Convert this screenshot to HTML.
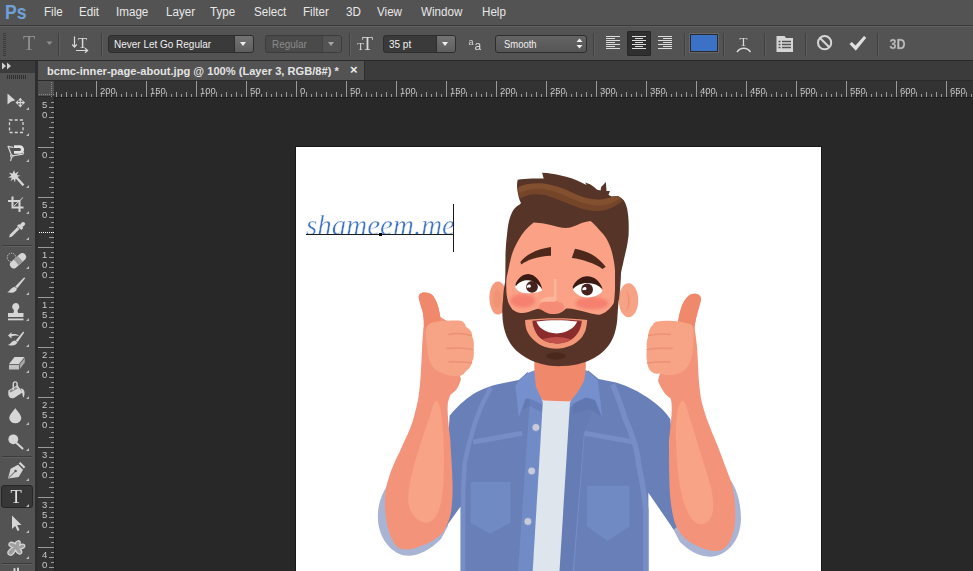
<!DOCTYPE html>
<html>
<head>
<meta charset="utf-8">
<title>Photoshop</title>
<style>
html,body{margin:0;padding:0;}
body{width:973px;height:571px;overflow:hidden;background:#282828;font-family:"Liberation Sans",sans-serif;position:relative;}
.abs{position:absolute;}
#menubar{left:0;top:0;width:973px;height:25px;background:#535353;}
#menubar span{position:absolute;top:5px;font-size:12.5px;line-height:15px;color:#e8e8e8;white-space:nowrap;transform:scaleX(0.93);transform-origin:0 0;}
#menuline{left:0;top:25px;width:973px;height:1px;background:#3a3a3a;}
#optbar{left:0;top:26px;width:973px;height:34px;background:#535353;border-top:1px solid #606060;box-sizing:border-box;}
#optline{left:0;top:60px;width:973px;height:1px;background:#2a2a2a;}
#tabbar{left:36px;top:61px;width:937px;height:19px;background:#3b3b3b;}
#tabline{left:36px;top:80px;width:937px;height:1px;background:#2a2a2a;}
#tab{left:38px;top:61px;width:326px;height:19px;background:#535353;border-right:1px solid #2e2e2e;}
#tab span{position:absolute;left:9px;top:3px;font-size:11px;font-weight:bold;color:#e4e4e4;white-space:nowrap;line-height:14px;transform:scaleX(1.01);transform-origin:0 0;}
#toolbox{left:0;top:61px;width:35px;height:510px;background:#535353;}
#tbhead{left:0;top:61px;width:35px;height:12px;background:#3b3b3b;}
#tbgap{left:35px;top:61px;width:3px;height:510px;background:#2e2e2e;}
#hruler{left:54px;top:81px;width:919px;height:16px;background:#323232;}
#vruler{left:38px;top:97px;width:16px;height:474px;background:#323232;}
#rcorner{left:38px;top:81px;width:16px;height:16px;background:#4e4e4e;border-bottom:1px solid #2a2a2a;box-sizing:border-box;}
#canvas{left:54px;top:97px;width:919px;height:474px;background:#282828;}
#doc{left:296px;top:147px;width:525px;height:424px;background:#ffffff;box-shadow:0 0 0 1px #171717;}
.dd{position:absolute;box-sizing:border-box;border:1px solid #2d2d2d;border-radius:3px;background:#3a3a3a;height:18px;top:35px;}
.dd span{position:absolute;left:5px;top:2px;font-size:10.5px;line-height:13px;color:#f0f0f0;white-space:nowrap;transform:scaleX(0.95);transform-origin:0 0;}
.dd i{position:absolute;right:0;top:0;width:18px;height:16px;background:linear-gradient(#737373,#5e5e5e);border-left:1px solid #2d2d2d;border-radius:0 2px 2px 0;}
.dd i:after{content:"";position:absolute;left:5px;top:6px;border-left:3.5px solid transparent;border-right:3.5px solid transparent;border-top:4px solid #f0f0f0;}
.sep{position:absolute;top:33px;width:1px;height:23px;background:#3e3e3e;box-shadow:1px 0 0 #5d5d5d;}
svg{position:absolute;left:0;top:0;overflow:visible;}
.rl{font-family:"Liberation Sans",sans-serif;font-size:9.5px;fill:#c8c8c8;}
</style>
</head>
<body>
<div id="canvas" class="abs"></div>
<div id="doc" class="abs"></div>
<svg width="973" height="571" viewBox="0 0 973 571" style="will-change:transform">
<defs><clipPath id="docclip"><rect x="296" y="147" width="525" height="424"/></clipPath>
<clipPath id="mouthclip"><path d="M532.400 320.700C540 319.800 548 319.400 556.500 319.400C565 319.400 573.500 319.800 581.800 320.700C581.600 324.200 580.700 327.600 579.200 330.700C577.300 334.300 574.500 337.400 571 339.700C566.700 342.300 561.600 343.500 556.500 343.400C551.500 343.400 546.500 342.200 542.300 339.600C538.900 337.400 536.500 334.300 535 330.700C533.500 327.600 532.600 324.200 532.400 320.700Z"/></clipPath>
<filter id="blur2" x="-30%" y="-30%" width="160%" height="160%"><feGaussianBlur stdDeviation="1.6"/></filter>
</defs>
<g clip-path="url(#docclip)">
<!-- ===== ARMS (behind shirt) ===== -->
<!-- left cuff -->
<path d="M389 483C381 494 377 507 378 520C379 536 388 550 402 555C414 558 428 552 441 539L448 526L440 500Z" fill="#a9b4d5"/>
<!-- right cuff -->
<path d="M731 481C738 491 741 506 741 520C740 538 731 551.500 716 556C702 559 689 551 680 542L672 527L690 500Z" fill="#a9b4d5"/>
<!-- ===== SHIRT ===== -->
<path d="M527.600 372L518.800 379.900C513 381.300 507 382.300 501.300 383.400C495 384.800 489 386.500 483.800 388.700C478.500 390.800 474 393.500 469.800 396.500C465.500 399.500 461.300 403 457.500 407C454.500 409.800 452 412.800 449.600 415.800L448.800 430L440 436V524L445.700 527.200L460.600 506.500V571H648.400V492.800L673.600 529.500L681 524V436L671.200 430L670.400 419.300C668.300 416.300 666 413.300 663.400 410.500C659.800 406.800 655.500 403.200 651 400C645.500 396 639.800 392.500 633.600 389.500C628 386.700 622 384.300 616 382.500L598.500 379L588 370.300L570 403H543Z" fill="#687fb8"/>
<!-- lighter seams -->
<g fill="none" stroke="#768dc6" stroke-width="5">
<path d="M490.800 387.800C487 395 483 402 480.300 408.800C476.500 418 473.500 427 471.500 435C468.500 445 466 455 464.500 465C463.500 480 463 495 463 510V571" stroke-width="4.500"/>
<path d="M612.600 384.300C617 395 621.500 406 624.800 417.600C629 427 632.500 436.500 635.300 445.600C637 452 638.200 458.500 638.800 465C642 480 644.500 495 645.800 510V571" stroke-width="5.500"/>
<path d="M473.300 442L522.300 433.300"/>
<path d="M584.500 433.300L633.600 442"/>
<path d="M583.500 432L572.800 571" stroke-width="2.500"/>
</g>
<!-- plackets -->
<path d="M530 398L543 405L533 571H518Z" fill="#718bc6"/>
<path d="M570 403L586 397L594 408L584 432L572.800 571H559.500Z" fill="#657cb5"/>
<path d="M574 403.500L586.300 397.400L595 400L602 417.600L590 409L572 414Z" fill="#5d74ae" opacity=".6"/>
<path d="M525.800 398.300L532.900 400L543.400 405.300L541 412L530 406L522 410Z" fill="#5d74ae" opacity=".5"/>
<!-- collars -->
<path d="M527.600 372.900L522.300 377.300C519.500 380 517 383 515.300 386C516 391 516.500 395.500 517 400C517.500 406 518.200 412 518.800 417.600C521 411 523.300 404.500 525.800 398.300C528 398.300 530.500 399 532.900 400C536.500 401.500 540 403.300 543.400 405.300C541 394 538 382.500 534.600 370.300Z" fill="#7690cd"/>
<path d="M586.300 370.300L597.700 379.900C599.500 392 601 404.500 602 417.600C599.800 411.500 597.500 405.500 595 400C592 398.800 589.200 397.800 586.300 397.400C582 399 578 401 574 403.500L568.800 408.800C571.500 397 577 384 584 370.300Z" fill="#7690cd"/>
<!-- pockets -->
<path d="M470.600 482H510.500V522.700L490 533.800L470.600 522.700Z" fill="#708bc3"/>
<path d="M587 485.700H629.500V526.400L607.300 541L587 526.400Z" fill="#708bc3"/>
<!-- tee -->
<path d="M542.900 400.500L570 401.400L559.500 571H532.700Z" fill="#dfe5ec"/>
<!-- buttons -->
<g fill="#c9ccd8" stroke="#6c86c2" stroke-width=".8">
<circle cx="535.900" cy="427.400" r="4"/><circle cx="531.600" cy="471" r="4"/><circle cx="527.900" cy="521.500" r="4"/>
</g>

<!-- ===== NECK ===== -->
<path d="M534.300 352H585.800V367.300C585.500 372 585 376.500 584 381C581.500 386 578.500 391 575.300 395.300L570 401.400L542.900 400.500C540 396 537.500 391 535.900 386.500C535 380 534.500 373.500 534.300 367.300Z" fill="#f0886b"/>

<!-- left forearm (with hand back + thumb) -->
<path d="M424.700 292.600C421 292.300 418.300 294.500 418.800 298C419.800 303 421.300 307 422.600 311.500C423.500 316 424 320 423.800 325C423.300 328 423.300 329 423.300 329.400C422.800 336 422.300 343 422 349C421.700 357 421.300 365 420.800 373.500C420.300 382 419.500 390 418.400 398C416.800 406 414.800 414 412.300 422.500C410 429 407.500 435 405 440C402.500 445 401 449 399.800 451.500C395 461 391 470 388.400 479C386 486 385 493 384.900 499.700C384.600 508 385.500 517 387.200 524.900C388.500 531 390.500 536.500 393 541C395 545.500 398 548.500 402 549C406.500 550 411.500 549.300 415.900 547.800C421.500 546 427 543.800 432 541C436.500 538.500 440.500 535.500 443.400 531.800L445.700 527.200C449 521.500 450.800 515.500 451.500 508.800C452.300 501 452.600 493.500 452.600 485.900C452.300 470 451 455 450.300 440C449.300 431 448.300 423 447.800 415C447.500 411 447.500 407 447.800 403C448.500 400.500 449.300 397.500 450.500 394.800C453.500 392.500 456 390.500 457.500 387.800C459 385 460.300 382 461 379L460 376L447 321L440.400 317C439.800 313.500 439 310.500 438.300 307.300C437 302.500 435 298.500 433 295.800C431 293.500 428 292.600 424.700 292.600Z" fill="#f3937a"/>

<path d="M436.800 400.500C440 403 442.500 415 443.500 440C444.500 465 444 485 441.500 500C439.500 512 435 521 428 522.600C420 523.500 413 517 409.500 508C406.500 498 409 484 413 470C418 450 427 425 431 412C432.500 406 434.500 401 436.800 400.500Z" fill="#f8a386"/>
<!-- right forearm -->
<path d="M693.600 293.700C697.500 293.200 701.300 295.500 701 299C700.300 303.500 699 307.500 697.800 311.500C696.500 316 695.500 320.500 694.800 325C694.700 327 694.800 328.500 694.800 329.400C695.800 336 696.700 343 697.200 349C697.700 357 698 365 698.400 373.500C698.900 382 699.700 390 700.900 398C702.500 406 705 414 708.200 422.500C710.500 429 713 435 715.200 440C718.500 448 721.500 455.500 724 463C726.500 469.500 729 475.500 731 481.300C732.500 487.500 734 493.500 734.600 499.700C735.300 506.500 735.600 513.500 735.300 520.300C734.800 527 733.500 533 731 538.700C729.500 543.500 726 547.500 721.800 550C717.500 551.500 712.500 551.300 708 550C702.500 548.500 697 546.300 692 543.300C687 540.500 682.500 536.500 679.300 531.800C676 526.500 673.800 520.500 672.500 513.400C670.800 504 669.800 495 669.500 485.900C669 470 669 455 669 440C670 431 671 423 671.500 415C671.800 411 671.800 407 671.500 403C671.500 401.500 671 399.800 670.400 398.300C667.500 396.300 665 394 663.400 391.300C661.300 388 659.300 384.500 658 380.800L659.200 376L678 321L678.800 317C679.500 313.500 680.300 310.500 681.300 307.400C682.500 304 683.700 302 685 300C687 296.500 690 294 693.600 293.700Z" fill="#f3937a"/>
<path d="M682.500 400.500C678 403 675.500 415 676 440C676.500 465 679 485 683 500C686.500 512 692 522 699 524C706 525.500 711.500 519.500 713 510.500C714.500 500 711 486 706.500 472C700.500 452 692 425 688 412C686.500 406 684.500 401 682.500 400.500Z" fill="#f8a386"/>

<!-- ===== HANDS ===== -->
<!-- thumbs -->
<path d="M424.700 292.600C421 292.300 418.300 294.500 418.800 298C419.800 303 421.300 307 422.600 311.500C423.500 316 424 320 423.800 325L426 331L441 326L440.400 317C439.800 313.500 439 310.500 438.300 307.300C437 302.500 435 298.500 433 295.800C431 293.500 428 292.600 424.700 292.600Z" fill="#f0886b"/>
<path d="M693.600 293.700C697.500 293.200 701.300 295.500 701 299C700.300 303.500 699 307.500 697.800 311.500C696.500 316 695.500 320.500 694.800 325L693 331L678 326L678.800 317C679.500 313.500 680.300 310.500 681.300 307.400C682.500 304 683.700 302 685 300C687 296.500 690 294 693.600 293.700Z" fill="#f0886b"/>
<!-- left fist -->
<path d="M425.700 332C425.500 327 428 323.500 433 322.500C437 321.500 441 321 447 320.800C452 320.500 457 320.500 461.300 320.800C464 322 465.500 324.500 466 327C470 329 472.500 332.500 472.300 336.800C474 340.500 474.300 345 473.500 349C474.300 353 474 358 472.300 361.300C471.500 365.500 469.500 369 466 371C464.500 373.500 462.500 375.500 460 376C455 376.500 451 376 446.600 374.800C441.500 373.500 437.500 371.500 434.300 368.600C430.500 364.500 428.500 359.500 428 354C427 347 426 339 425.700 332Z" fill="#f6a485"/>
<path d="M449 334.500C456 333 464 333.500 471 335.500M447 348.500C455 347.500 465 348 473 349.400M449 362C456 361.500 464 362 471.500 362.800" fill="none" stroke="#ee9073" stroke-width="1.500" stroke-linecap="round"/>
<!-- right fist -->
<path d="M693.500 331.900C693.700 327.500 692.500 325 691 324.500C686 322.500 680 321.500 674 321C668 320.500 662 320.500 657 321.500C655 322 653.500 323 653 324.500C650 327.500 648 332 648.200 336.800C646.500 340.500 646.300 345 647 349C646.300 353 646.200 357.500 647 361.300C647.500 365.500 648.500 369 650.600 371C652.500 373 655.500 374 659.200 373.500C664 375 669 375.500 674 374.800C679 373.800 683.500 371.800 686.200 368.600C689.500 364.500 691.500 359.500 692.300 354C693.200 347 693.600 339 693.500 331.900Z" fill="#f6a485"/>
<path d="M670 334.500C663 333.500 656 334 648.700 335.500M672 348.500C664 348 655 348.300 647 349.400M670 362C663 361.500 655 362 647.500 363" fill="none" stroke="#ee9073" stroke-width="1.500" stroke-linecap="round"/>

<!-- ===== HEAD ===== -->
<!-- ears -->
<ellipse cx="498" cy="298" rx="8.700" ry="16.500" fill="#f59a7c"/>
<ellipse cx="497.500" cy="299" rx="4" ry="9" fill="#f19375"/>
<ellipse cx="628.500" cy="300.300" rx="9.700" ry="17" fill="#f6a284"/>
<path d="M626 290C629 294 630.500 300 629 306C628 309 627 311 625.500 312C628 308 628.500 303 628 298C627.600 295 627 292.500 626 290Z" fill="#ee8f72"/>
<!-- hair back -->
<path d="M505 300C505.300 285 505.300 270 505.500 254.600C505.800 247 506.200 241 507 235C507.500 230 508 225 509 221C510 217 511.300 213.500 513 210.400C515 207.500 517.500 205.500 519.700 204.400L521 203C519.700 200.500 518.800 198 518.400 195.700C517.600 192.500 517.200 189.500 517 186.400C516.900 184 517.200 181.800 517.700 179.700C522 179 527 178.600 531.700 178.400L543.700 178.400L542.100 172.700C545.500 172.800 548.500 173.200 551.800 173.700C556.500 174.300 561 175.300 565.100 176.400C569.500 177.500 573.500 178.900 577.100 180.400C580.500 181.800 583.500 183.300 586.500 185L585.200 182.400L590.500 184.400C593 186 595 187.800 597.200 189.700L600.500 190.400L601.200 187C602.800 185.300 604.300 183.700 605.900 182.100L606.500 191L609.900 191L608.500 195L611.900 196.400C614 196.200 616.500 196.200 618.600 196.400C620.700 197.300 622.500 198.700 623.900 200.400C625.500 203 626.500 205.800 627.200 209C628 213 628.400 217 628.600 221C628.800 225.500 628.800 230.500 628.600 235C628 240.500 627.200 246 626.100 250C625 255 623.800 259.500 623 264C621.800 268 621.200 271.500 620.800 275L619 300Z" fill="#573428"/>
<!-- hair highlight band -->
<path d="M518.400 187C523 185 527.500 184 531.700 183.700C536 183.300 540.500 183.300 545 183.700C549.500 184.500 554 185.500 558.400 187C563 188.500 567.500 190.300 571.800 192.400C576.500 194.500 581 196.300 585.200 197.700C589.500 198.900 594 199.700 598.500 199.700C603 199.500 607.500 198.500 611.900 197C614 196.500 616.500 196.200 618.600 196.400C620 197 621.500 198.500 622.600 201C619 203.800 615.500 206 611.900 207.800C607.500 209.800 603 210.800 598.500 211C594 211 589.500 210.700 585.200 209.800C580.500 208.500 576 206.800 571.800 205C567 203 562.500 201.200 558.400 199.700C554 198 549.500 196.200 545 195C540.500 194.200 536 194 531.700 194.400C527.500 195 523.500 196.500 519.700 198.400C519 195.500 518.500 191 518.400 187Z" fill="#754529"/>
<path d="M518.400 187C523 185 527.500 184 531.700 183.700C536 183.300 540.500 183.300 545 183.700C549.500 184.500 554 185.500 558.400 187C563 188.500 567.500 190.300 571.800 192.400C576.500 194.500 581 196.300 585.200 197.700C589.500 198.900 594 199.700 598.500 199.700C603 199.500 607.500 198.500 611.900 197C614 196.500 616.500 196.200 618.600 196.400L620 198.300C617 200.300 614.500 201.800 611.900 203C607.500 204.800 603 205.500 598.500 205.500C594 205.400 589.500 204.700 585.200 203.500C580.500 202 576 200.200 571.800 198.400C567 196.300 562.500 194.500 558.400 193C554 191.500 549.500 190 545 189.300C540.500 188.700 536 188.700 531.700 189.300C527.500 190 523.500 191.200 518.800 193C518.500 191 518.400 189 518.400 187Z" fill="#83502f"/>
<!-- face -->
<path d="M506 300V282.500C506.400 278.500 507 275 508 271.500C509 266 510.200 261 511.500 255.700C513.300 250 515.700 245 518.500 240C522.500 232.500 528 226.500 533.700 222.400C537.500 222.500 541 223 545 223.800C549.500 224.700 554 225.800 558.400 227C562 227.800 565.500 228.200 569 227.800C572.800 227 576.500 225.500 579.800 223.800C583.500 222.500 587 221.300 590.500 221C593.500 223.300 596 226 598.500 229C602 232.500 605 236 607.200 240C609.800 245 611.600 250 612.800 255.700C614 261 614.800 266 615.100 271.500V330L560 350L506 330Z" fill="#faa186"/>
<!-- eyebrows -->
<path d="M520.400 262C523.500 258 527 255.300 530.700 253.400C537 250 544 248 551 247L551 255.700C544.500 256 538 257 532.200 258.900C528 260.300 524.500 262 521.200 264.400Z" fill="#4d281b"/>
<path d="M575 248.700C581 249.800 586.500 251.600 591.500 254.200C597 257.300 601.500 261.500 605.700 266.800L602.500 269C598.500 266 593.500 263.500 588.300 262C583 260 577.500 258.600 571.800 258Z" fill="#4d281b"/>
<!-- cheeks -->
<ellipse cx="522.800" cy="300.800" rx="12.500" ry="6.700" fill="#f4796a" opacity=".8" filter="url(#blur2)"/>
<ellipse cx="592" cy="303.300" rx="16.500" ry="6.200" fill="#f4796a" opacity=".8" filter="url(#blur2)"/>
<!-- eyes -->
<path d="M515 286.800C517 282 521.500 279.500 527 279.300C533.500 279.300 539.500 283.500 542.200 290.600C538.500 292.500 534 293.300 529.400 293.300C525.500 293.200 522.300 292.800 519.800 291.700C517.500 290.600 515.800 289 515 286.800Z" fill="#ffffff"/>
<circle cx="532" cy="286.800" r="5.900" fill="#45221e"/>
<path d="M526.700 287.200C526.900 285.300 528.300 284.200 529.800 284.600C531 285 531.300 286.400 530.500 287.300C529.900 287.900 529 287.900 528.600 287.300C528.200 287.900 527.300 288 526.700 287.200Z" fill="#ffffff"/>
<path d="M515.500 284.200C518 278 523 274 528.300 274C535 274.300 540.300 280.500 542.200 289C538.500 284.200 534 280.600 528 280.200C523 280.200 519 282 515.800 286.300Z" fill="#3b1a13"/>
<path d="M572.700 289C575.500 284 581 281.300 587.100 281.300C594 281.300 599.500 285 602.600 291.100C599.500 295 594 297.500 587.100 297.500C581 297.300 575.500 294.500 572.700 289Z" fill="#ffffff"/>
<circle cx="587.100" cy="289.500" r="5.900" fill="#45221e"/>
<path d="M582.300 289.700C582.500 287.800 583.900 286.700 585.400 287.100C586.600 287.500 586.900 288.900 586.100 289.800C585.500 290.400 584.600 290.400 584.200 289.800C583.800 290.400 582.900 290.500 582.300 289.700Z" fill="#ffffff"/>
<path d="M572.700 286.800C575.500 280.500 581 276.200 587.100 276.200C594.500 276.200 600.300 281.500 602.600 289C598.500 285 593.500 283 587.100 283C581.500 283 576.500 285.200 573 289Z" fill="#3b1a13"/>
<!-- nose -->
<ellipse cx="551.500" cy="307.200" rx="12.700" ry="6.800" fill="#f58d76"/>
<path d="M553.800 279H556.600V299.500C556.600 301 555.500 301.800 554 301.800H539.500C541.500 298.800 545 297 549 296.800H553.800Z" fill="#fbbba3" opacity=".8"/>
<!-- beard -->
<path d="M505.500 281C504.500 284 503.500 290 503 300C502.300 305 502.200 309 502.300 313.400C502.400 318 502.900 322.500 503.700 326.700C504.800 331.500 506.300 336 508.400 340C510.500 344 513.200 347.700 516.400 350.800C519.200 353.300 522.300 355.500 525.700 357.400C528.700 359.200 531.800 360.800 535 362.100C539.300 363.700 543.800 364.800 548.400 365.500C552.800 366 557.300 366.200 561.800 366.100C566.300 366 570.800 365.600 575.200 364.800C579.800 363.900 584.300 362.600 588.500 360.800C592.300 359.200 595.900 357.200 599.200 354.800C602.700 352.100 605.900 349 608.600 345.400C611.200 341.700 613.200 337.700 614.600 333.400C616 329 616.800 324.500 617.200 320C617.700 313.500 618 306.500 618.700 300C619.200 295 619.700 291 620.200 287.200L620.800 270L615.100 268V287.200C614.900 292.500 614.600 298 613.900 302.700C612.300 305.700 610 308.500 607.200 310.700C604.800 312.700 602 314.200 599.200 314.700C595.600 314.500 592 313.700 588.500 312.700C584 311.500 579.600 310.200 575.200 309.400C572 308.700 568.900 308.400 565.800 308.700C564.600 310 563.300 311.200 561.800 312C559.700 313.200 557.400 313.900 555.100 314C552.800 314.100 550.500 314 548.400 313.400C546 312.600 543.800 311.400 541.800 310C540.500 309.200 539.200 308.800 537.800 308.700C534.700 309.500 531.600 310.800 528.400 312C525.300 312.900 522.100 313.200 519 312.700C516.600 312.100 514.400 311 512.400 309.400C510.800 307.500 509.500 305.200 508.400 302.700C507.400 299.500 506.700 296 506.400 292L506 275Z" fill="#583428"/>
<!-- mouth -->
<path d="M525.100 320C535 318.800 545.500 318.300 556.200 318.300C566.800 318.300 577.300 318.800 587.200 320C587 323.200 586.600 326.400 585.800 329.400C584.700 332.800 582.900 335.900 580.500 338.700C577.500 341.900 573.800 344.400 569.800 346.100C565.600 347.800 561 348.700 556.500 348.800C552.300 348.700 548.200 348 544.400 346.800C540.400 345.300 536.700 342.900 533.700 340C530.600 337 528 333.400 526.400 329.400C525.500 326.400 525.100 323.200 525.100 320Z" fill="#f29678"/>
<path d="M532.400 320.700C540 319.800 548 319.400 556.500 319.400C565 319.400 573.500 319.800 581.800 320.700C581.600 324.200 580.700 327.600 579.200 330.700C577.300 334.300 574.500 337.400 571 339.700C566.700 342.300 561.600 343.500 556.500 343.400C551.500 343.400 546.500 342.200 542.300 339.600C538.900 337.400 536.500 334.300 535 330.700C533.500 327.600 532.600 324.200 532.400 320.700Z" fill="#8a2c2b"/>
<ellipse cx="556.500" cy="343.300" rx="17" ry="6.300" fill="#c2504a" clip-path="url(#mouthclip)"/>
<path d="M536.400 321.400C543 320.500 549.700 320.200 556.500 320.200C563.300 320.200 570.300 320.500 577.200 321.400C576 324.200 574 326.700 571.200 328.700C567 331.700 561.800 333.300 556.500 333.400C551.200 333.300 546 331.700 541.800 328.700C539.300 326.700 537.500 324.200 536.400 321.400Z" fill="#ffffff"/>
<!-- soul patch -->
<ellipse cx="556" cy="356" rx="9.700" ry="3.500" fill="#4a281b"/>

<!-- ===== TEXT LAYER ===== -->
<text x="306" y="234.500" font-family="Liberation Serif, serif" font-style="italic" font-size="30" fill="#3e74c5" stroke="#ffffff" stroke-width=".45" textLength="149" lengthAdjust="spacingAndGlyphs">shameem.me</text>
<path d="M306 234.500H454" stroke="#1a1a1a" stroke-width="1" shape-rendering="crispEdges"/>
<rect x="379" y="233" width="3" height="3" fill="#000"/>
<path d="M453.500 204V252" stroke="#1a1a1a" stroke-width="1" shape-rendering="crispEdges"/>
</g>
</svg>
<div id="menubar" class="abs">
<span style="left:5px;top:1px;font-size:21px;line-height:22px;font-weight:bold;color:#6fa1d8;transform:scaleX(0.84)">Ps</span>
<span style="left:44px">File</span>
<span style="left:79px">Edit</span>
<span style="left:116px">Image</span>
<span style="left:166px">Layer</span>
<span style="left:210px">Type</span>
<span style="left:254px">Select</span>
<span style="left:303px">Filter</span>
<span style="left:346px">3D</span>
<span style="left:377px">View</span>
<span style="left:421px">Window</span>
<span style="left:482px">Help</span>
</div>
<div id="menuline" class="abs"></div>
<div id="optbar" class="abs"></div>
<div id="optline" class="abs"></div>
<div id="tabbar" class="abs"></div>
<div id="tabline" class="abs"></div>
<div id="tab" class="abs"><span>bcmc-inner-page-about.jpg @ 100% (Layer 3, RGB/8#) *</span>
<b style="position:absolute;left:312px;top:2px;font-size:13px;line-height:14px;font-weight:bold;color:#ececec">×</b></div>
<div id="toolbox" class="abs"></div>
<div id="tbhead" class="abs"></div>
<div id="tbgap" class="abs"></div>
<div id="hruler" class="abs"></div>
<div id="vruler" class="abs"></div>
<div id="rcorner" class="abs"></div>
<div class="abs" style="left:54px;top:97px;width:919px;height:1px;background:#1f1f1f"></div>
<div class="abs" style="left:54px;top:97px;width:1px;height:474px;background:#1f1f1f"></div>

<div class="dd" style="left:108px;width:146px;"><span>Never Let Go Regular</span><i></i></div>
<div class="dd" style="left:265px;width:77px;background:#4a4a4a;border-color:#3c3c3c"><span style="color:#8a8a8a;left:6px">Regular</span><i style="background:#5c5c5c;border-color:#3c3c3c;opacity:.55"></i></div>
<div class="dd" style="left:383px;width:73px;"><span>35 pt</span><i></i></div>
<div class="dd" style="left:495px;width:92px;background:linear-gradient(#646464,#555555);"><span style="left:8px;transform:scaleX(.9)">Smooth</span></div>
<div class="sep" style="left:58px"></div>
<div class="sep" style="left:101px"></div>
<div class="sep" style="left:349px"></div>
<div class="sep" style="left:593px"></div>
<div class="sep" style="left:684px"></div>
<div class="sep" style="left:723px"></div>
<div class="sep" style="left:764px"></div>
<div class="sep" style="left:805px"></div>
<div class="sep" style="left:877px"></div>
<div class="abs" style="left:627px;top:31px;width:24px;height:25px;background:#2f2f2f;border-radius:2px;box-shadow:inset 0 0 0 1px #262626"></div>
<div class="abs" style="left:690px;top:34px;width:28px;height:18px;background:#3b72c6;box-sizing:border-box;border:1px solid #2a2a2a;box-shadow:0 0 0 1px #676767"></div>
<svg width="973" height="571" viewBox="0 0 973 571" shape-rendering="crispEdges">
<path d="M56.5 92V97M61.5 94V97M66.5 92V97M71.5 94V97M76.5 92V97M81.5 94V97M86.5 92V97M91.5 94V97M96.5 81V97M101.5 94V97M106.5 92V97M111.5 94V97M116.5 92V97M121.5 94V97M126.5 92V97M131.5 94V97M136.5 92V97M141.5 94V97M146.5 81V97M151.5 94V97M156.5 92V97M161.5 94V97M166.5 92V97M171.5 94V97M176.5 92V97M181.5 94V97M186.5 92V97M191.5 94V97M196.5 81V97M201.5 94V97M206.5 92V97M211.5 94V97M216.5 92V97M221.5 94V97M226.5 92V97M231.5 94V97M236.5 92V97M241.5 94V97M246.5 81V97M251.5 94V97M256.5 92V97M261.5 94V97M266.5 92V97M271.5 94V97M276.5 92V97M281.5 94V97M286.5 92V97M291.5 94V97M296.5 81V97M301.5 94V97M306.5 92V97M311.5 94V97M316.5 92V97M321.5 94V97M326.5 92V97M331.5 94V97M336.5 92V97M341.5 94V97M346.5 81V97M351.5 94V97M356.5 92V97M361.5 94V97M366.5 92V97M371.5 94V97M376.5 92V97M381.5 94V97M386.5 92V97M391.5 94V97M396.5 81V97M401.5 94V97M406.5 92V97M411.5 94V97M416.5 92V97M421.5 94V97M426.5 92V97M431.5 94V97M436.5 92V97M441.5 94V97M446.5 81V97M451.5 94V97M456.5 92V97M461.5 94V97M466.5 92V97M471.5 94V97M476.5 92V97M481.5 94V97M486.5 92V97M491.5 94V97M496.5 81V97M501.5 94V97M506.5 92V97M511.5 94V97M516.5 92V97M521.5 94V97M526.5 92V97M531.5 94V97M536.5 92V97M541.5 94V97M546.5 81V97M551.5 94V97M556.5 92V97M561.5 94V97M566.5 92V97M571.5 94V97M576.5 92V97M581.5 94V97M586.5 92V97M591.5 94V97M596.5 81V97M601.5 94V97M606.5 92V97M611.5 94V97M616.5 92V97M621.5 94V97M626.5 92V97M631.5 94V97M636.5 92V97M641.5 94V97M646.5 81V97M651.5 94V97M656.5 92V97M661.5 94V97M666.5 92V97M671.5 94V97M676.5 92V97M681.5 94V97M686.5 92V97M691.5 94V97M696.5 81V97M701.5 94V97M706.5 92V97M711.5 94V97M716.5 92V97M721.5 94V97M726.5 92V97M731.5 94V97M736.5 92V97M741.5 94V97M746.5 81V97M751.5 94V97M756.5 92V97M761.5 94V97M766.5 92V97M771.5 94V97M776.5 92V97M781.5 94V97M786.5 92V97M791.5 94V97M796.5 81V97M801.5 94V97M806.5 92V97M811.5 94V97M816.5 92V97M821.5 94V97M826.5 92V97M831.5 94V97M836.5 92V97M841.5 94V97M846.5 81V97M851.5 94V97M856.5 92V97M861.5 94V97M866.5 92V97M871.5 94V97M876.5 92V97M881.5 94V97M886.5 92V97M891.5 94V97M896.5 81V97M901.5 94V97M906.5 92V97M911.5 94V97M916.5 92V97M921.5 94V97M926.5 92V97M931.5 94V97M936.5 92V97M941.5 94V97M946.5 81V97M951.5 94V97M956.5 92V97M961.5 94V97M966.5 92V97M971.5 94V97" stroke="#9a9a9a" stroke-width="1" fill="none"/>
<path d="M51 102.5H54M49 107.5H54M51 112.5H54M49 117.5H54M51 122.5H54M49 127.5H54M51 132.5H54M49 137.5H54M51 142.5H54M38 147.5H54M51 152.5H54M49 157.5H54M51 162.5H54M49 167.5H54M51 172.5H54M49 177.5H54M51 182.5H54M49 187.5H54M51 192.5H54M38 197.5H54M51 202.5H54M49 207.5H54M51 212.5H54M49 217.5H54M51 222.5H54M49 227.5H54M51 232.5H54M49 237.5H54M51 242.5H54M38 247.5H54M51 252.5H54M49 257.5H54M51 262.5H54M49 267.5H54M51 272.5H54M49 277.5H54M51 282.5H54M49 287.5H54M51 292.5H54M38 297.5H54M51 302.5H54M49 307.5H54M51 312.5H54M49 317.5H54M51 322.5H54M49 327.5H54M51 332.5H54M49 337.5H54M51 342.5H54M38 347.5H54M51 352.5H54M49 357.5H54M51 362.5H54M49 367.5H54M51 372.5H54M49 377.5H54M51 382.5H54M49 387.5H54M51 392.5H54M38 397.5H54M51 402.5H54M49 407.5H54M51 412.5H54M49 417.5H54M51 422.5H54M49 427.5H54M51 432.5H54M49 437.5H54M51 442.5H54M38 447.5H54M51 452.5H54M49 457.5H54M51 462.5H54M49 467.5H54M51 472.5H54M49 477.5H54M51 482.5H54M49 487.5H54M51 492.5H54M38 497.5H54M51 502.5H54M49 507.5H54M51 512.5H54M49 517.5H54M51 522.5H54M49 527.5H54M51 532.5H54M49 537.5H54M51 542.5H54M38 547.5H54M51 552.5H54M49 557.5H54M51 562.5H54M49 567.5H54" stroke="#9a9a9a" stroke-width="1" fill="none"/>
<path d="M39 94.5H54M51.5 82V97" stroke="#8a8a8a" stroke-width="1" stroke-dasharray="1 1" fill="none"/>
<path d="M39 232.5H54" stroke="#ffffff" stroke-width="1" stroke-dasharray="1 1" fill="none"/>
</svg>
<svg width="973" height="571" viewBox="0 0 973 571">
<text class="rl" x="100" y="94">200</text>
<text class="rl" x="150" y="94">150</text>
<text class="rl" x="200" y="94">100</text>
<text class="rl" x="250" y="94">50</text>
<text class="rl" x="300" y="94">0</text>
<text class="rl" x="350" y="94">50</text>
<text class="rl" x="400" y="94">100</text>
<text class="rl" x="450" y="94">150</text>
<text class="rl" x="500" y="94">200</text>
<text class="rl" x="550" y="94">250</text>
<text class="rl" x="600" y="94">300</text>
<text class="rl" x="650" y="94">350</text>
<text class="rl" x="700" y="94">400</text>
<text class="rl" x="750" y="94">450</text>
<text class="rl" x="800" y="94">500</text>
<text class="rl" x="850" y="94">550</text>
<text class="rl" x="900" y="94">600</text>
<text class="rl" x="950" y="94">650</text>
<text class="rl" x="42" y="107.5">5</text>
<text class="rl" x="42" y="117.5">0</text>
<text class="rl" x="42" y="157.5">0</text>
<text class="rl" x="42" y="207.5">5</text>
<text class="rl" x="42" y="217.5">0</text>
<text class="rl" x="42" y="257.5">1</text>
<text class="rl" x="42" y="267.5">0</text>
<text class="rl" x="42" y="277.5">0</text>
<text class="rl" x="42" y="307.5">1</text>
<text class="rl" x="42" y="317.5">5</text>
<text class="rl" x="42" y="327.5">0</text>
<text class="rl" x="42" y="357.5">2</text>
<text class="rl" x="42" y="367.5">0</text>
<text class="rl" x="42" y="377.5">0</text>
<text class="rl" x="42" y="407.5">2</text>
<text class="rl" x="42" y="417.5">5</text>
<text class="rl" x="42" y="427.5">0</text>
<text class="rl" x="42" y="457.5">3</text>
<text class="rl" x="42" y="467.5">0</text>
<text class="rl" x="42" y="477.5">0</text>
<text class="rl" x="42" y="507.5">3</text>
<text class="rl" x="42" y="517.5">5</text>
<text class="rl" x="42" y="527.5">0</text>
<text class="rl" x="42" y="557.5">4</text>
<text class="rl" x="42" y="567.5">0</text>
<text class="rl" x="42" y="577.5">0</text>
</svg>
<svg width="973" height="571" viewBox="0 0 973 571">
<!-- toolbox header -->
<path d="M2 62.5l4 3.5-4 3.5zM7 62.5l4 3.5-4 3.500z" fill="#d0d0d0"/>
<path d="M7.500 75v4M9.500 75v4M11.500 75v4M13.500 75v4M15.500 75v4M17.500 75v4M19.500 75v4M21.500 75v4M23.500 75v4M25.500 75v4" stroke="#2e2e2e" stroke-width="1"/>
<!-- options-bar grip -->
<path d="M3 33.500h3M3 35.500h3M3 37.500h3M3 39.500h3M3 41.500h3M3 43.500h3M3 45.500h3M3 47.500h3M3 49.500h3M3 51.500h3M3 53.500h3M3 55.500h3" stroke="#3a3a3a" stroke-width="1" shape-rendering="crispEdges"/>
<!-- little flyout triangles -->
<g fill="#bdbdbd">
<path d="M29 107v3h-3zM29 133v3h-3zM29 159v3h-3zM29 185v3h-3zM29 211v3h-3zM29 237v3h-3zM29 266v3h-3zM29 292v3h-3zM29 318v3h-3zM29 344v3h-3zM29 370v3h-3zM29 396v3h-3zM29 422v3h-3zM29 448v3h-3zM29 478v3h-3zM29 504v3h-3zM29 530v3h-3zM29 556v3h-3z"/>
</g>
<!-- separators -->
<path d="M2 245.500H32M2 456.500H32M2 563.500H32" stroke="#3c3c3c" stroke-width="1"/>
<path d="M2 246.500H32M2 457.500H32M2 564.500H32" stroke="#5e5e5e" stroke-width="1"/>
<g fill="#d6d6d6" stroke="none">
<!-- move -->
<path d="M7.500 93.500V104.500L10.800 101.800L15.200 100.300Z"/>
<path d="M20.300 97.800l2.300 2.600h-1.700v1.600h1.600v-1.700l2.600 2.300-2.600 2.300v-1.700h-1.600v1.600h1.700l-2.300 2.600-2.300-2.600h1.700v-1.600h-1.600v1.700l-2.600-2.300 2.600-2.300v1.700h1.600v-1.600h-1.700z"/>
</g>
<!-- marquee -->
<rect x="9.500" y="120" width="13.500" height="12.500" fill="none" stroke="#d6d6d6" stroke-width="1.300" stroke-dasharray="3 2.200"/>
<!-- magnetic lasso -->
<g fill="none" stroke="#d6d6d6" stroke-width="1.200" stroke-linejoin="round" stroke-linecap="round">
<path d="M13 147.300L8 146.300L11.800 156L23 154.200L23.600 152.200"/>
<path d="M11.600 157L10.700 160.600"/>
<circle cx="11.800" cy="156" r="1.200" fill="#535353"/>
</g>
<path d="M14 145.200H19.800A4.250 4.250 0 0 1 19.800 153.700H14V151H19.500A1.550 1.550 0 0 0 19.500 147.900H14Z" fill="#e4e4e4"/>
<!-- magic wand -->
<g fill="#d6d6d6">
<path d="M14 170l1.200 3.600 3.300-2-1.600 3.400 3.600.8-3.500 1.300 2 3.100-3.400-1.400-.6 3.700-1.500-3.400-3 2.200 1.300-3.500-3.700-.4 3.300-1.800-2.400-2.900 3.700.9z"/>
<path d="M15.500 178l1.600-1.600 7.200 8.200-1.700 1.700z"/>
</g>
<!-- crop -->
<g fill="none" stroke="#d6d6d6" stroke-width="2">
<path d="M12.500 196.500V207.500H23.500"/>
<path d="M8 201H19.500V212"/>
<path d="M14 206L23 197.500" stroke-width="1"/>
</g>
<!-- eyedropper -->
<g fill="#d6d6d6">
<path d="M9 237.500l1-3 7.500-7.500 2 2-7.500 7.500z"/>
<path d="M17 226l2-2 1 .8 1.800-2.200a1.900 1.900 0 0 1 2.800 2.600l-2.200 1.900.9 1-2 2z"/>
</g>
<!-- healing brush -->
<g>
<circle cx="11.500" cy="257.500" r="4.300" fill="none" stroke="#d6d6d6" stroke-width="1" stroke-dasharray="1.200 1.200"/>
<rect x="8.500" y="257" width="19" height="7.500" rx="3.700" fill="#d6d6d6" transform="rotate(-42 18 260.700)"/>
<rect x="15.500" y="257" width="5.500" height="7.500" fill="#9a9a9a" transform="rotate(-42 18 260.700)"/>
</g>
<!-- brush -->
<g fill="#d6d6d6">
<path d="M24.200 277.300l1 .9-8 10-2-1.600z"/>
<path d="M14.600 286.700l2.400 2c-.6 3-3.600 4.800-9.800 3.500 2.500-.8 3.500-4.600 7.400-5.500z"/>
</g>
<!-- stamp -->
<g fill="#d6d6d6">
<path d="M15.700 303a3.600 3.600 0 0 1 2.300 6.400c-.6.700-.6 2.300.2 3.600h5.300v4H8v-4h5.300c.8-1.300.8-2.900.2-3.600a3.600 3.600 0 0 1 2.200-6.400z"/>
<rect x="8" y="318.500" width="15.500" height="1.800"/>
</g>
<!-- history brush -->
<g fill="#d6d6d6">
<path d="M23.200 331.500l1 .9-6.500 9.500-2-1.500z"/>
<path d="M15 340.500l2.400 1.800c-.8 2.800-4 3.800-9.400 2.600 2.600-.6 3.300-3.800 7-4.400z"/>
<path d="M8 335.500l3.500-3.200v2c3.500-.6 6 0 7.500 1.700-2.300-.8-4.700-.7-7.500.3v2.200z"/>
</g>
<!-- eraser -->
<g>
<path d="M14.500 357h10l-5.500 7h-10z" fill="#d6d6d6"/>
<path d="M9 364.800h10v4.700h-10z" fill="#c2c2c2"/>
<path d="M19.800 364.300l5-6.400v4.600l-5 6.400z" fill="#a8a8a8"/>
</g>
<!-- paint bucket -->
<g>
<path d="M8.300 390.500L17.500 385L22.500 392.500L14 398C11 399 8.700 397.500 8.300 394.500Z" fill="#d6d6d6"/>
<path d="M9.300 390.800L17.200 386.200L18.500 388L10.500 392.600Z" fill="#8a8a8a"/>
<path d="M13.300 390V383.800a1.900 1.900 0 0 1 3.800 0V388" fill="none" stroke="#d6d6d6" stroke-width="1.400"/>
<path d="M20.500 388.300C23.300 388.500 24.600 390.500 24.500 393C24.400 395 24.300 396.500 23.600 397.500C22.700 396.800 22.500 395.300 22.400 393.500Z" fill="#d6d6d6"/>
</g>
<!-- blur drop -->
<path d="M15.300 408c1.600 3 6 6.500 6 10a6 5.200 0 0 1-12 0c0-3.500 4.400-7 6-10z" fill="#d6d6d6"/>
<!-- dodge -->
<g>
<circle cx="13.300" cy="439.300" r="4.900" fill="#d6d6d6"/>
<path d="M16.500 443l6 5.600" stroke="#d6d6d6" stroke-width="2" stroke-linecap="round"/>
</g>
<!-- pen -->
<g fill="#d6d6d6">
<path d="M8 478.600l2.600-9.800 7.400-4 5 5-4.300 7.200z"/>
<path d="M18.800 463.600l1.500-1.500 5 5-1.500 1.500z"/>
<path d="M9 477.600l6.200-6.200" stroke="#535353" stroke-width="1"/>
<circle cx="15.600" cy="471" r="1.200" fill="#535353"/>
</g>
<!-- type tool (selected) -->
<rect x="1.500" y="485.500" width="31" height="22" rx="2.500" fill="#373737" stroke="#262626" stroke-width="1"/>
<path d="M29 504v3h-3z" fill="#bdbdbd"/>
<text x="16.200" y="503.200" text-anchor="middle" font-family="Liberation Serif, serif" font-size="18.500" fill="#e2e2e2">T</text>
<!-- path selection arrow -->
<path d="M12 515.500v13.500l3.200-3 2.300 5 2-.9-2.300-5 4.300-.2z" fill="#d6d6d6"/>
<!-- custom shape -->
<path d="M17.500 541c1.800-.8 3.200.5 2.600 2.600l-.4 1.600c1.600-1 3.400-1.500 4.600-.4 1.200 1.200.2 3-1.600 3.500l-2.300.7c1 1.300 2.100 3.100.9 4.400-1.300 1.300-3.200.5-4.300-.9l-1.600-2.200c-.9 2-2.200 4.900-4.600 5-2.200 0-3.500-1.800-2.800-3.700.7-1.800 2.600-3 4.400-4.100-1.700-.5-3.600-1.400-3.500-3.100.2-2 2.600-2.600 4.400-1.700l2 1c0-1.300.9-2.200 2.200-2.700z" fill="#a0a0a0" stroke="#d6d6d6" stroke-width="1.300"/>
<!-- next tool partial (hand) -->
<path d="M14.500 571v-2M18 571v-2.500" stroke="#d6d6d6" stroke-width="2" stroke-linecap="round"/>

<!-- OPTIONS BAR ICONS -->
<text x="29" y="50.300" text-anchor="middle" font-family="Liberation Serif, serif" font-size="20" fill="#8e8e8e">T</text>
<path d="M46.500 41.500h6l-3 3.500z" fill="#8e8e8e"/>
<!-- text orientation -->
<g fill="none" stroke="#dadada" stroke-width="1.200">
<path d="M74.500 36.500v10.500M72.200 44.500l2.300 2.600 2.300-2.600"/>
<path d="M76 50.500h11.500M85 48.200l2.600 2.300-2.600 2.300"/>
</g>
<text x="82.500" y="47.500" text-anchor="middle" font-family="Liberation Serif, serif" font-size="15" fill="#dadada">T</text>
<!-- font size tT -->
<text x="360.500" y="50" text-anchor="middle" font-family="Liberation Serif, serif" font-size="11" fill="#dadada">T</text>
<text x="367.500" y="50" text-anchor="middle" font-family="Liberation Serif, serif" font-size="18" fill="#dadada">T</text>
<!-- aa -->
<text x="468.500" y="45" font-family="Liberation Sans, sans-serif" font-size="9" fill="#dadada">a</text>
<text x="474.500" y="49.500" font-family="Liberation Sans, sans-serif" font-size="12" fill="#dadada">a</text>
<!-- smooth arrows -->
<path d="M576.500 42l3-3.500 3 3.500zM576.500 45l3 3.500 3-3.500z" fill="#f0f0f0"/>
<!-- align icons -->
<g stroke="#dcdcdc" stroke-width="1" shape-rendering="crispEdges">
<path d="M606 36.500h14M606 38.500h9M606 40.500h14M606 42.500h9M606 44.500h14M606 46.500h9M606 48.500h14"/>
<path d="M632 36.500h14M635 38.500h8M632 40.500h14M635 42.500h8M632 44.500h14M635 46.500h8M632 48.500h14"/>
<path d="M658 36.500h14M663 38.500h9M658 40.500h14M663 42.500h9M658 44.500h14M663 46.500h9M658 48.500h14"/>
</g>
<!-- warp text -->
<text x="743.500" y="46" text-anchor="middle" font-family="Liberation Serif, serif" font-size="13" fill="#dadada">T</text>
<path d="M737 52c3.500-5 10-5 13.500 0" fill="none" stroke="#dadada" stroke-width="1.500"/>
<!-- panel icon -->
<g>
<path d="M776.500 36h8l1.500 2h7v14h-16.500z" fill="#d6d6d6"/>
<path d="M778.500 41.500h2M782 41.500h9M778.500 44.500h2M782 44.500h9M778.500 47.500h2M782 47.500h9" stroke="#535353" stroke-width="1.300"/>
</g>
<!-- cancel -->
<circle cx="824.600" cy="42.700" r="6.600" fill="none" stroke="#d6d6d6" stroke-width="2"/>
<path d="M820 38l9.300 9.300" stroke="#d6d6d6" stroke-width="2"/>
<!-- commit -->
<path d="M849.500 44l2.300-2 3.700 3.600 8.500-9.600 2.300 1.700-10.500 13z" fill="#e0e0e0"/>
<!-- 3D -->
<text x="889.500" y="49" font-family="Liberation Sans, sans-serif" font-weight="bold" font-size="15" fill="#c4c4c4" textLength="16" lengthAdjust="spacingAndGlyphs" stroke="#8a8a8a" stroke-width=".4">3D</text>
</svg>
</body></html>
